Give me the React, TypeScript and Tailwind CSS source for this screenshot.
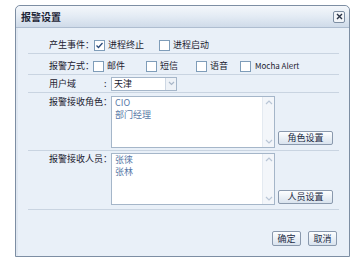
import React from 'react';

const font = { fontFamily: '"Noto Sans CJK SC", "Liberation Sans", sans-serif' };

function Box({ checked }: { checked?: boolean }) {
  return (
    <span className="inline-flex items-center justify-center w-[11px] h-[11px] border border-[#7f9db9] bg-white shrink-0">
      {checked && (
        <svg width="9" height="9" viewBox="0 0 9 9">
          <path d="M1.5 4.5 L3.5 6.5 L7.5 2" fill="none" stroke="#2a4a7a" strokeWidth="1.3" />
        </svg>
      )}
    </span>
  );
}

function Btn({ label, className = '' }: { label: string; className?: string }) {
  return (
    <div className={`h-[14px] flex items-center justify-center whitespace-nowrap border border-[#8a99ad] rounded-[2px] bg-gradient-to-b from-[#fdfeff] to-[#d9e3ee] text-[9px] text-[#1c2b44] ${className}`}>
      {label}
    </div>
  );
}

function ListBox({ items }: { items: string[] }) {
  return (
    <div className="w-[164px] h-[52px] border border-[#a5b6c9] bg-white flex shrink-0">
      <div className="flex-1 px-[3px] text-[9px] leading-[12px] text-[#5a7aa8]">
        {items.map((t) => (
          <div key={t}>{t}</div>
        ))}
      </div>
      <div className="w-[12px] bg-[#f3f6fa] border-l border-[#e4eaf1] flex flex-col justify-between items-center py-[2px]">
        <svg width="8" height="6" viewBox="0 0 8 6"><path d="M1 5 L4 2 L7 5" fill="none" stroke="#b9c6d6" strokeWidth="1.2" /></svg>
        <svg width="8" height="6" viewBox="0 0 8 6"><path d="M1 1 L4 4 L7 1" fill="none" stroke="#b9c6d6" strokeWidth="1.2" /></svg>
      </div>
    </div>
  );
}

function Sep() {
  return <div className="h-px shrink-0 bg-[#c9d4e1] ml-[10px] mr-[10px]" />;
}

export default function App() {
  return (
    <div className="w-[357px] h-[263px] bg-white pt-[5px] pl-[15px]" style={font}>
      <div className="w-[335px] h-[252px] border border-[#7d8ea3] rounded-t-[5px] bg-[#e9f0f8] flex flex-col">
        {/* title bar */}
        <div className="h-[22px] shrink-0 rounded-t-[5px] bg-gradient-to-b from-[#f4f7fb] via-[#e3ebf4] to-[#cfdbe9] border-b border-[#aebdd0] flex items-center justify-between pl-[5px] pr-[4px]">
          <span className="text-[10px] font-bold text-[#1b2436]">报警设置</span>
          <div className="w-[12px] h-[12px] border border-[#7d8ea3] rounded-[2px] bg-[#f2f5f9] flex items-center justify-center">
            <svg width="7" height="7" viewBox="0 0 7 7"><path d="M1 1 L6 6 M6 1 L1 6" stroke="#2a3447" strokeWidth="1.4" /></svg>
          </div>
        </div>

        <div className="flex-1 border-l-2 border-[#dfe7f1] text-[9px] text-[#1c2230] whitespace-nowrap flex flex-col pt-[10px]">
          {/* row 1 */}
          <div className="h-[14px] flex items-center pl-[31px]">
            <span className="w-[45px]">产生事件：</span>
            <Box checked />
            <span className="ml-[3px] w-[51px]">进程终止</span>
            <Box />
            <span className="ml-[3px]">进程启动</span>
          </div>
          <div className="h-[1px]" />
          <Sep />
          <div className="h-[5px]" />
          {/* row 2 */}
          <div className="h-[14px] flex items-center pl-[31px]">
            <span className="w-[44px]">报警方式：</span>
            <Box />
            <span className="ml-[3px] w-[39px]">邮件</span>
            <Box />
            <span className="ml-[3px] w-[36px]">短信</span>
            <Box />
            <span className="ml-[3px] w-[30px]">语音</span>
            <Box />
            <span className="ml-[4px] text-[8px]">Mocha Alert</span>
          </div>
          <div className="h-[1px]" />
          <Sep />
          {/* row 3 */}
          <div className="h-[17px] flex items-center pl-[31px]">
            <span className="w-[55px]">用户域</span>
            <span className="w-[7px]">:</span>
            <div className="w-[66px] h-[14px] border border-[#a5b6c9] bg-white flex items-center">
              <span className="flex-1 pl-[2px]">天津</span>
              <div className="w-[11px] h-[12px] bg-[#eef2f7] border-l border-[#cdd7e3] flex items-center justify-center">
                <svg width="7" height="5" viewBox="0 0 7 5"><path d="M1 1 L3.5 3.5 L6 1" fill="none" stroke="#a9b7c8" strokeWidth="1.2" /></svg>
              </div>
            </div>
          </div>
          <Sep />
          {/* row 4 */}
          <div className="flex pl-[31px] pt-[3px] pb-[2px]">
            <span className="w-[62px] leading-[12px]">报警接收角色：</span>
            <ListBox items={['CIO', '部门经理']} />
            <div className="flex items-end ml-[3px] pb-[3px]">
              <Btn label="角色设置" className="w-[55px]" />
            </div>
          </div>
          <Sep />
          {/* row 5 */}
          <div className="flex pl-[31px] pt-[2px] pb-[4px]">
            <span className="w-[62px] leading-[12px]">报警接收人员：</span>
            <ListBox items={['张徕', '张林']} />
            <div className="flex items-end ml-[3px] pb-[1px]">
              <Btn label="人员设置" className="w-[55px]" />
            </div>
          </div>
          <Sep />
          <div className="flex justify-end gap-[7px] pr-[12px] pt-[21px]">
            <Btn label="确定" className="w-[29px] h-[15px]" />
            <Btn label="取消" className="w-[29px] h-[15px]" />
          </div>
        </div>
      </div>
    </div>
  );
}
